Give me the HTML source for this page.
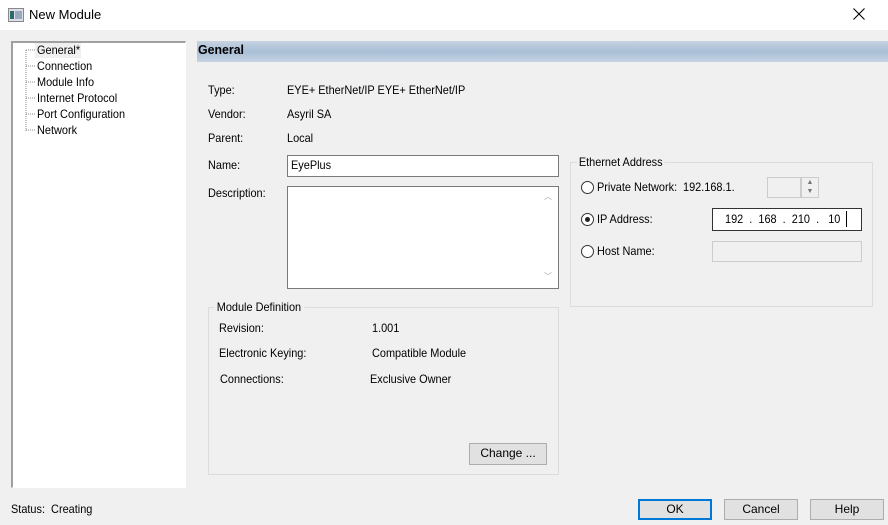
<!DOCTYPE html>
<html><head><style>
*{margin:0;padding:0;box-sizing:border-box}
body{width:888px;height:525px;background:#f0f0f0;font-family:"Liberation Sans",sans-serif;font-size:12px;color:#000;position:relative;overflow:hidden}
.a{position:absolute;white-space:nowrap;line-height:14px}
.t{position:absolute;white-space:nowrap;line-height:14px;transform:scaleX(.91);transform-origin:left}
.box{position:absolute;background:#fff;border:1px solid #7a7a7a}
.grp{position:absolute;border:1px solid #dcdcdc}
.btn{position:absolute;background:#e1e1e1;border:1px solid #adadad;text-align:center;line-height:19px}
.rad{position:absolute;width:13px;height:13px;border:1px solid #333;border-radius:50%;background:#fff}
</style></head><body>
<div style="position:absolute;left:0;top:0;width:888px;height:30px;background:#fff"></div>
<svg class="a" style="left:8px;top:8px" width="16" height="14"><rect x="0.5" y="0.5" width="15" height="13" fill="#dde" stroke="#888"/><rect x="2" y="3" width="4" height="8" fill="#2a6a6a"/><rect x="7" y="3" width="7" height="8" fill="#9ab"/></svg>
<div class="a" style="left:29px;top:8px;font-size:13px">New Module</div>
<svg class="a" style="left:853px;top:8px" width="12" height="12"><path d="M0.5 0.5L11.5 11.5M11.5 0.5L0.5 11.5" stroke="#000" stroke-width="1.1"/></svg>

<div class="box" style="left:11px;top:41px;width:175px;height:447px;border-color:#a0a0a0 #fff #fff #a0a0a0;border-width:2px 1px 1px 2px"></div>
<svg class="a" style="left:24px;top:44px" width="14" height="90"><path d="M2 6V87M2 6H12M2 22H12M2 38H12M2 54H12M2 70H12M2 86H12" stroke="#888" stroke-dasharray="1 1" fill="none"/></svg>
<div style="position:absolute;left:35px;top:43px;width:46px;height:15px;background:#f0f0f0"></div>
<div class="t" style="left:37px;top:43px">General*</div>
<div class="t" style="left:37px;top:59px">Connection</div>
<div class="t" style="left:37px;top:75px">Module Info</div>
<div class="t" style="left:37px;top:91px">Internet Protocol</div>
<div class="t" style="left:37px;top:107px">Port Configuration</div>
<div class="t" style="left:37px;top:123px">Network</div>

<div style="position:absolute;left:197px;top:41px;width:691px;height:21px;background:linear-gradient(#c6d3e2,#a9bfd7 50%,#c6d3e2)"></div>
<div class="a" style="left:198px;top:43px;font-size:13px;font-weight:bold;transform:scaleX(.95);transform-origin:left">General</div>

<div class="t" style="left:208px;top:83px">Type:</div>
<div class="t" style="left:287px;top:83px">EYE+ EtherNet/IP EYE+ EtherNet/IP</div>
<div class="t" style="left:208px;top:107px">Vendor:</div>
<div class="t" style="left:287px;top:107px">Asyril SA</div>
<div class="t" style="left:208px;top:131px">Parent:</div>
<div class="t" style="left:287px;top:131px">Local</div>
<div class="t" style="left:208px;top:158px">Name:</div>
<div class="box" style="left:287px;top:155px;width:272px;height:22px"></div>
<div class="t" style="left:291px;top:158px">EyePlus</div>
<div class="t" style="left:208px;top:186px">Description:</div>
<div class="box" style="left:287px;top:186px;width:272px;height:103px"></div>
<div class="a" style="left:544px;top:190px;font-size:8px;color:#a0a0a0">︿</div>
<div class="a" style="left:544px;top:270px;font-size:8px;color:#a0a0a0">﹀</div>

<div class="grp" style="left:208px;top:307px;width:351px;height:168px"></div>
<div class="t" style="left:214px;top:300px;background:#f0f0f0;padding:0 3px">Module Definition</div>
<div class="t" style="left:219px;top:321px">Revision:</div>
<div class="t" style="left:372px;top:321px">1.001</div>
<div class="t" style="left:219px;top:346px">Electronic Keying:</div>
<div class="t" style="left:372px;top:346px">Compatible Module</div>
<div class="t" style="left:220px;top:372px">Connections:</div>
<div class="t" style="left:370px;top:372px">Exclusive Owner</div>
<div class="btn" style="left:469px;top:443px;width:78px;height:22px">Change ...</div>

<div class="grp" style="left:570px;top:162px;width:303px;height:145px"></div>
<div class="t" style="left:577px;top:155px;background:#f0f0f0;padding:0 2px">Ethernet Address</div>
<div class="rad" style="left:581px;top:181px"></div>
<div class="t" style="left:597px;top:180px">Private Network:</div>
<div class="t" style="left:683px;top:180px">192.168.1.</div>
<div style="position:absolute;left:767px;top:177px;width:34px;height:21px;border:1px solid #ccc;background:#f0f0f0"></div>
<div style="position:absolute;left:801px;top:177px;width:18px;height:21px;border:1px solid #ccc;background:#f0f0f0;font-size:7px;line-height:9px;text-align:center;color:#777">▲<br>▼</div>
<div class="rad" style="left:581px;top:213px"></div>
<div style="position:absolute;left:585px;top:217px;width:5px;height:5px;border-radius:50%;background:#222"></div>
<div class="t" style="left:597px;top:212px">IP Address:</div>
<div class="box" style="left:712px;top:208px;width:150px;height:23px;border-color:#333"></div>
<div class="t" style="left:725px;top:212px">192&nbsp;&nbsp;.&nbsp;&nbsp;168&nbsp;&nbsp;.&nbsp;&nbsp;210&nbsp;&nbsp;.&nbsp;&nbsp;&nbsp;10</div>
<div style="position:absolute;left:846px;top:211px;width:1px;height:16px;background:#000"></div>
<div class="rad" style="left:581px;top:245px"></div>
<div class="t" style="left:597px;top:244px">Host Name:</div>
<div style="position:absolute;left:712px;top:241px;width:150px;height:21px;border:1px solid #ccc;background:#f0f0f0"></div>

<div class="t" style="left:11px;top:502px">Status:&nbsp; Creating</div>
<div class="btn" style="left:638px;top:499px;width:74px;height:21px;border:2px solid #0078d7;line-height:17px">OK</div>
<div class="btn" style="left:724px;top:499px;width:74px;height:21px">Cancel</div>
<div class="btn" style="left:810px;top:499px;width:74px;height:21px">Help</div>
</body></html>
